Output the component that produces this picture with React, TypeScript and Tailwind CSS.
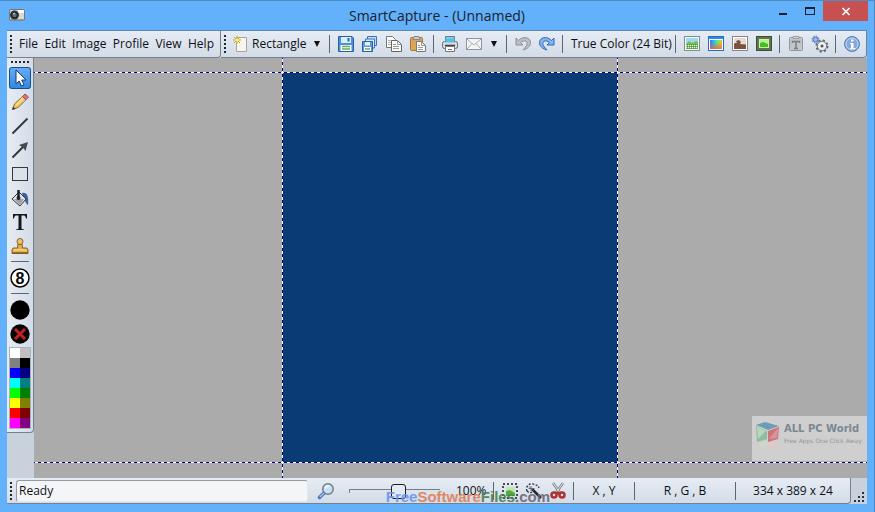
import type { ReactNode } from "react";

const panel = "bg-gradient-to-b from-[#e6ecf4] to-[#d3dce7] border-[#77818d]";

const Grip = ({ vertical = false }: { vertical?: boolean }) => (
  <div
    className={
      vertical
        ? "h-[18px] w-[2px] shrink-0 bg-[repeating-linear-gradient(180deg,#1d2733_0_2px,transparent_2px_4px)]"
        : "h-[2px] w-[18px] shrink-0 bg-[repeating-linear-gradient(90deg,#1d2733_0_2px,transparent_2px_4px)]"
    }
  />
);

const Separator = () => <div className="-ml-px h-[18px] w-px shrink-0 bg-[#5c6671]" />;

interface IconButtonProps {
  label: string;
  children: ReactNode;
}

const IconButton = ({ label, children }: IconButtonProps) => (
  <button type="button" aria-label={label} title={label} className="size-4 shrink-0">
    <svg viewBox="0 0 16 16" className="size-4 overflow-visible" fill="none">
      {children}
    </svg>
  </button>
);

const DropArrow = ({ label }: { label: string }) => (
  <button type="button" aria-label={label} className="w-[9px] shrink-0">
    <svg viewBox="0 0 9 8" className="h-2 w-[9px]">
      <path d="M1 1h6L4 7z" fill="#111" />
    </svg>
  </button>
);

const TitleBar = () => (
  <header className="relative flex h-[29px] shrink-0 items-start justify-end">
    <svg viewBox="0 0 16 12" className="absolute left-[9px] top-2 h-3 w-4">
      <rect x=".5" y=".5" width="15" height="11" rx="1.500" fill="#d8d8d5" stroke="#777" />
      <path d="M9 1h6v3H9z" fill="#fafafa" />
      <path d="M1 10h14v1.500H1z" fill="#9b9b98" />
      <circle cx="5.500" cy="6" r="4.500" fill="#30343a" />
      <circle cx="5.500" cy="6" r="2.800" fill="#62707c" stroke="#171b20" />
      <path d="M4 5l2-1" stroke="#d7e4ec" />
    </svg>
    <h1 className="absolute inset-x-0 top-[5px] text-center text-[14px] leading-5 text-[#17212b]">
      SmartCapture - (Unnamed)
    </h1>
    <div className="relative mr-[6px] flex">
      <button type="button" aria-label="Minimize" className="h-5 w-[26px]">
        <svg viewBox="0 0 26 20"><path d="M9 12h8v2H9z" fill="#14212e" /></svg>
      </button>
      <button type="button" aria-label="Maximize" className="h-5 w-[27px]">
        <svg viewBox="0 0 27 20"><path d="M9 6h10v8H9zM10 8v5h8V8z" fill="#14212e" fillRule="evenodd" /></svg>
      </button>
      <button type="button" aria-label="Close" className="h-5 w-[45px] bg-[#c75050]">
        <svg viewBox="0 0 45 20"><path d="M19.500 7l7 7M26.500 7l-7 7" stroke="#fff" strokeWidth="1.700" /></svg>
      </button>
    </div>
  </header>
);

const PictureFrame = ({ stroke, children }: { stroke: string; children: ReactNode }) => (
  <>
    <rect x=".5" y=".5" width="15" height="14" fill="#fff" stroke={stroke} />
    {children}
  </>
);

const TopBars = () => (
  <div className="flex h-[27px] shrink-0 bg-[#c9d1dc]">
    <nav className={`flex w-[214px] shrink-0 items-center rounded-br-[4px] border-r border-b pl-[3px] ${panel}`}>
      <Grip vertical />
      <div className="flex flex-1 justify-between pr-[6px] pl-[7px]">
        {["File", "Edit", "Image", "Profile", "View", "Help"].map((item) => (
          <button key={item} type="button">{item}</button>
        ))}
      </div>
    </nav>
    <div className={`flex flex-1 items-center gap-2 overflow-hidden rounded-br-[4px] border-r border-b pl-[3px] ${panel}`}>
      <Grip vertical />
      <button type="button" className="-ml-px flex w-[72px] shrink-0 items-center gap-1 whitespace-nowrap">
        <svg viewBox="0 0 15 16" className="h-4 w-[15px] shrink-0">
          <path d="M3.500 1.500h10v14h-10z" fill="#f7f5ee" stroke="#a8a79f" />
          <path d="M4 0v8M0 4h8M1 1l6 6M7 1L1 7" stroke="#c9ab18" />
          <circle cx="4" cy="4" r="1.500" fill="#fff47a" />
        </svg>
        Rectangle
      </button>
      <DropArrow label="Capture modes" />
      <Separator />
      <IconButton label="Save">
        <path d="M.5.500h13.500l1.500 1.500v13.500H.500z" fill="#4c90dc" stroke="#28609f" />
        <path d="M3 1h10v6H3z" fill="#d9edfb" />
        <path d="M9.500 2h2v3.500h-2z" fill="#2d67ab" />
        <path d="M2.500 9h11v6h-11z" fill="#fff" />
        <path d="M4 10.500h8M4 13h8" stroke="#5fac59" strokeWidth="1.500" />
      </IconButton>
      <IconButton label="Save all">
        <path d="M5.500.500h9v9h-9z" fill="#bdd9f6" stroke="#3c73b9" />
        <path d="M3.500 3h9v9h-9z" fill="#d9eafb" stroke="#3c73b9" />
        <path d="M.5 5.500h10v10H.500z" fill="#5c9be0" stroke="#28609f" />
        <path d="M3 6h5v3.500H3z" fill="#e4f2fd" />
        <path d="M2 11h7v4H2z" fill="#fff" />
        <path d="M3 13h5" stroke="#5fac59" strokeWidth="1.500" />
      </IconButton>
      <IconButton label="Copy">
        <path d="M.5.500h6l3 3v8h-9z" fill="#fafafa" stroke="#777" />
        <path d="M2 4.500h4M2 6.500h4M2 8.500h4" stroke="#b5b5b5" />
        <path d="M5.500 4.500h6l4 4v7h-10z" fill="#fafafa" stroke="#666" />
        <path d="M11.500 4.500v4h4M7 8.500h3M7 10.500h6M7 12.500h6" stroke="#999" />
      </IconButton>
      <IconButton label="Paste">
        <rect x=".5" y="1.500" width="12" height="13" rx="1" fill="#dba557" stroke="#a77730" />
        <path d="M4 .5h5l1 3H3z" fill="#ccc" stroke="#888" />
        <path d="M6.500 5.500h5l4 4v6h-9z" fill="#fafafa" stroke="#777" />
        <path d="M11.500 5.500v4h4M8 9.500h2M8 11.500h5M8 13.500h5" stroke="#999" />
      </IconButton>
      <Separator />
      <IconButton label="Print">
        <path d="M3.500.500h9v7h-9z" fill="#7fd3ec" stroke="#6b7b86" />
        <rect x=".5" y="5.500" width="15" height="7" rx="2" fill="#d7dade" stroke="#646b72" />
        <path d="M3.500 2.500h9v4h-9z" fill="#58c1e2" />
        <path d="M3 9.500h10" stroke="#3c4248" strokeWidth="1.500" />
        <path d="M3.500 10.500h9v5h-9z" fill="#fff" stroke="#777" />
        <path d="M6 13.500h4" stroke="#777" />
      </IconButton>
      <IconButton label="E-mail">
        <rect x=".5" y="2.500" width="15" height="11" fill="#f4f4f4" stroke="#8f969d" />
        <path d="M1 3l7 6 7-6M1 13l5-5.500M15 13l-5-5.500" stroke="#a8adb2" />
      </IconButton>
      <DropArrow label="Send to" />
      <Separator />
      <IconButton label="Undo">
        <path d="M1 2v7h7L5.500 6.500C9 3.500 13 5 12 8.500c-.6 2-2 3-4 5.500 4-1 7.500-3.500 7.500-7.500C15.500 1.500 8-.500 3.500 4.500z" fill="#bcc0c4" stroke="#8c9196" strokeLinejoin="round" />
      </IconButton>
      <IconButton label="Redo">
        <path d="M15 2v7H8l2.500-2.500C7 3.500 3 5 4 8.500c.6 2 2 3 4 5.500C4 13 .5 10.500.500 6.500.500 1.500 8-.500 12.500 4.500z" fill="#85b7ef" stroke="#2c67b8" strokeLinejoin="round" />
      </IconButton>
      <Separator />
      <button type="button" className="w-[97px] shrink-0 text-left whitespace-nowrap">True Color (24 Bit)</button>
      <Separator />
      <IconButton label="Resize picture">
        <PictureFrame stroke="#7f8c91">
          <path d="M2 2h12v6H2z" fill="#9adcf2" />
          <path d="M2 8l3-3 3 2 4-2 2 1v7H2z" fill="#79b85b" />
          <path d="M2 9.500h12M2 11.500h12" stroke="#e4f5d8" strokeDasharray="1 1" />
          <path d="M3 8.500h11M3 10.500h11M3 12.500h11" stroke="#4d9a46" strokeDasharray="1 1" />
        </PictureFrame>
      </IconButton>
      <IconButton label="Colors">
        <defs>
          <linearGradient id="hues">
            <stop stopColor="#3f6df0" />
            <stop offset=".35" stopColor="#22c8f0" />
            <stop offset=".65" stopColor="#6be86a" />
            <stop offset="1" stopColor="#ffc02c" />
          </linearGradient>
          <linearGradient id="warm" x2="0" y2="1">
            <stop offset=".2" stopColor="#ff5a3c" stopOpacity="0" />
            <stop offset="1" stopColor="#ff5a3c" stopOpacity=".8" />
          </linearGradient>
        </defs>
        <PictureFrame stroke="#1e6fc4">
          <path d="M1 1h14v2H1z" fill="#2b8ee6" />
          <path d="M2 4h12v9H2z" fill="url(#hues)" />
          <path d="M2 4h12v9H2z" fill="url(#warm)" />
        </PictureFrame>
      </IconButton>
      <IconButton label="Sepia">
        <PictureFrame stroke="#8c8585">
          <path d="M2 2h12v7H2z" fill="#e6dad4" />
          <path d="M2 8l1-1h2L4 5l3-1 2 2-1 2 6 .5V13H2z" fill="#79533f" />
        </PictureFrame>
      </IconButton>
      <IconButton label="Frame">
        <rect x=".5" y=".5" width="15" height="14" fill="#5b7555" stroke="#3a4e3b" />
        <path d="M3 3h10v9H3z" fill="#d8f0a0" />
        <path d="M4 4h8v4H4z" fill="#b6f090" />
        <path d="M4 7l3-1 5 2v3H4z" fill="#3cc421" />
      </IconButton>
      <Separator />
      <IconButton label="Text from clipboard">
        <rect x="1.500" y="1.500" width="13" height="13" rx="1" fill="#c3c6ca" stroke="#92979c" />
        <path d="M5 .5h6v2H5z" fill="#ddd" stroke="#989ca0" />
        <path d="M4.500 7V5.500h7V7M8 5.500v7M6 12.500h4" stroke="#777c81" strokeWidth="1.500" />
      </IconButton>
      <IconButton label="Settings">
        <circle cx="3.500" cy="3.500" r="2.500" fill="#9bb8e8" stroke="#4772b6" />
        <circle cx="3.500" cy="3.500" r="3.500" stroke="#4772b6" strokeDasharray="1.400 1.350" />
        <circle cx="10" cy="10" r="5.500" stroke="#60666d" strokeWidth="2" strokeDasharray="2.200 2.120" />
        <circle cx="10" cy="10" r="4.700" fill="#eceff1" stroke="#70767c" />
        <circle cx="10" cy="10" r="1.500" fill="#4f565d" />
      </IconButton>
      <Separator />
      <IconButton label="About">
        <circle cx="8" cy="8" r="7.400" fill="#83a9dd" stroke="#4877b8" />
        <circle cx="8" cy="8" r="6" stroke="#c6daf2" />
        <path d="M7 3.500h2.500v2H7zM6 7h3.500v5H11v1H6v-1h1V8H6z" fill="#fff" />
      </IconButton>
    </div>
  </div>
);

interface Tool {
  label: string;
  icon: ReactNode;
  active?: boolean;
  ruleAfter?: boolean;
}

const tools: Tool[] = [
  {
    label: "Select",
    active: true,
    icon: <path d="M7 3v14l3.200-3 2.300 5 2.500-1.200-2.300-4.800H17z" fill="#fff" stroke="#173b64" strokeLinejoin="round" />,
  },
  {
    label: "Pencil",
    icon: (
      <>
        <path d="M4 18l1.500-5 8-7.500 3.500 3.300L9 16.500z" fill="#f3cb61" stroke="#8b6a2a" />
        <path d="M13.500 5.500L16 3l3.500 3L17 8.800z" fill="#df7078" stroke="#a04c50" />
        <path d="M12 7l3.300 3.300" stroke="#c9ced3" strokeWidth="1.500" />
        <path d="M7 14l7-6.500" stroke="#fff0a8" />
        <path d="M3 19l1-3.500L6.500 18z" fill="#333" />
      </>
    ),
  },
  { label: "Line", icon: <path d="M3.500 18.500L18.500 3.500" stroke="#33383d" strokeWidth="2" /> },
  {
    label: "Arrow",
    icon: (
      <>
        <path d="M3.500 18.500L15 7" stroke="#33383d" strokeWidth="2" />
        <path d="M19 3l-2.500 9-2.500-3.500L10 6z" fill="#444a50" />
      </>
    ),
  },
  { label: "Rectangle", icon: <rect x="3.500" y="4.500" width="15" height="13" fill="#dce2ea" stroke="#343a40" /> },
  {
    label: "Fill",
    icon: (
      <>
        <path d="M13 6c5-1 7 3 6 12-3-2-3-6-5-8z" fill="#3e61a1" />
        <path d="M3 12l7-7 7 7-6 7z" fill="#e5e7e9" stroke="#333" />
        <path d="M5 12h10l-4 6z" fill="#9da2a7" />
        <path d="M9.500 3v7" stroke="#1e2226" strokeWidth="2.500" />
        <circle cx="9.500" cy="11" r="2" fill="#1e2226" />
      </>
    ),
  },
  {
    label: "Text",
    icon: <path d="M4 3h14v4.500h-1C16.500 5 16 4.500 14 4.500h-1.500V17c0 1 .5 1.300 2.500 1.500V19H7v-.500c2-.2 2.500-.5 2.500-1.500V4.500H8C6 4.500 5.500 5 5 7.500H4z" fill="#15191d" />,
  },
  {
    label: "Stamp",
    ruleAfter: true,
    icon: (
      <>
        <path d="M9 9h4l.5 4H18l1 2v3.500H3V15l1-2h4.500z" fill="#e2b052" stroke="#886322" />
        <circle cx="11" cy="6.500" r="3" fill="#efc36c" stroke="#886322" />
        <path d="M4.500 15h13" stroke="#fbe3a4" />
        <path d="M3 18h16" stroke="#825b1d" strokeWidth="1.500" />
      </>
    ),
  },
  {
    label: "Counter",
    ruleAfter: true,
    icon: (
      <>
        <circle cx="11" cy="11" r="9" fill="#fff" stroke="#080808" strokeWidth="1.500" />
        <text x="11" y="16.500" textAnchor="middle" fontSize="16" fontWeight="700" fontFamily="Liberation Sans" fill="#080808">8</text>
      </>
    ),
  },
  { label: "Outline color", icon: <circle cx="11" cy="11" r="9.700" fill="#000" /> },
  {
    label: "No fill",
    icon: (
      <>
        <circle cx="11" cy="11" r="9.700" fill="#060606" />
        <path d="M6 6l10 10M16 6L6 16" stroke="#c51f22" strokeWidth="3" />
      </>
    ),
  },
];

const swatches = [
  { name: "White", color: "bg-[#ffffff]" },
  { name: "Silver", color: "bg-[#c0c0c0]" },
  { name: "Gray", color: "bg-[#808080]" },
  { name: "Black", color: "bg-[#000000]" },
  { name: "Blue", color: "bg-[#0000ff]" },
  { name: "Navy", color: "bg-[#000080]" },
  { name: "Aqua", color: "bg-[#00ffff]" },
  { name: "Teal", color: "bg-[#008080]" },
  { name: "Lime", color: "bg-[#00ff00]" },
  { name: "Green", color: "bg-[#008000]" },
  { name: "Yellow", color: "bg-[#ffff00]" },
  { name: "Olive", color: "bg-[#808000]" },
  { name: "Red", color: "bg-[#ff0000]" },
  { name: "Maroon", color: "bg-[#800000]" },
  { name: "Fuchsia", color: "bg-[#ff00ff]" },
  { name: "Purple", color: "bg-[#800080]" },
];

const ToolBox = () => (
  <aside className="w-[27px] shrink-0 bg-[#c9d1dc]">
    <div className="flex flex-col items-center rounded-br-[4px] border-r border-b border-[#77818d] bg-gradient-to-r from-[#e6ecf4] to-[#d3dce7] pb-[3px]">
      <div className="flex h-2 items-center"><Grip /></div>
      {tools.map((tool) => (
        <div key={tool.label} className="flex flex-col items-center">
          <button type="button" aria-label={tool.label} title={tool.label} className="flex h-6 items-center">
            <svg
              viewBox="0 0 22 22"
              fill="none"
              className={`size-[22px] ${tool.active ? "rounded-[3px] bg-gradient-to-b from-[#65adf7] to-[#2f86e2] outline outline-1 -outline-offset-1 outline-[#1b4f8c]" : ""}`}
            >
              {tool.icon}
            </svg>
          </button>
          {tool.ruleAfter && <div className="my-[3px] h-[2px] w-[18px] border-t border-[#5c6671]" />}
        </div>
      ))}
      <div className="mt-px grid w-[22px] grid-cols-2 border border-[#aab2bc]">
        {swatches.map((swatch) => (
          <button key={swatch.name} type="button" aria-label={swatch.name} className={`h-[10px] ${swatch.color}`} />
        ))}
      </div>
    </div>
  </aside>
);

const guideX = "absolute -inset-x-[200vw] h-px bg-[repeating-linear-gradient(90deg,#00008b_0_3px,#fff_3px_6px)]";
const guideY = "absolute -inset-y-[200vh] w-px bg-[repeating-linear-gradient(180deg,#00008b_0_3px,#fff_3px_6px)]";

const Canvas = () => (
  <main className="relative flex flex-1 items-start justify-center overflow-hidden bg-[#ababab] pt-[14px] pr-px">
    {/* Captured area with its crop guides */}
    <div className="relative h-[391px] w-[336px] bg-[#0a3b75]">
      <div className={`${guideX} top-0`} />
      <div className={`${guideX} bottom-0`} />
      <div className={`${guideY} left-0`} />
      <div className={`${guideY} right-0`} />
    </div>
    <div className="absolute right-0 bottom-[17px] flex h-[45px] w-[115px] gap-1 bg-[#cfcfcf] pt-[6px] pl-1 whitespace-nowrap">
      <svg viewBox="0 0 24 32" className="h-8 w-6 shrink-0">
        <path d="M0 3L9 0l14 4-11 4z" fill="#6a9eb5" />
        <path d="M0 4l11 5v8L1 20z" fill="#8ebd9b" />
        <path d="M1 5l9 4-8 8z" fill="#b8d5c0" />
        <path d="M12 9l11-4-1 12-10 3z" fill="#ca747b" />
        <path d="M13 17l9-11-1 10z" fill="#d99499" />
        <path d="M1 22l10-3v10z" fill="#cbd7cd" />
        <path d="M12 21l9-3-1 7-8 4z" fill="#dec9cb" />
      </svg>
      <div className="font-['DejaVu_Sans',sans-serif]">
        <p className="text-[10px] leading-[13px] font-bold text-[#7b8792]">ALL PC World</p>
        <p className="mt-px text-[6px] leading-[9px] text-[#8e969d]">Free Apps One Click Away</p>
      </div>
    </div>
  </main>
);

const StatusBar = () => (
  <footer className="relative flex h-[26px] shrink-0 bg-[#c9d1dc]">
    <div className={`flex flex-1 items-center rounded-br-[4px] border-r border-b pt-px pl-[3px] whitespace-nowrap ${panel}`}>
      <Grip vertical />
      <output className="ml-1 h-[22px] flex-1 rounded-[3px] border border-[#929ba5] border-r-[#e3e8ed] border-b-[#e3e8ed] bg-[#f4f5f6] pl-[2px] leading-5">
        Ready
      </output>
      <div className="ml-[10px] flex shrink-0 items-center">
        <IconButton label="Zoom">
          <path d="M1.500 14.500L6 10" stroke="#4776ba" strokeWidth="3.500" strokeLinecap="round" />
          <path d="M1.800 14L6 10" stroke="#a7c7ee" strokeWidth="1.500" />
          <circle cx="10" cy="6" r="5.200" fill="#c5e1f8" stroke="#747d86" strokeWidth="1.500" />
          <path d="M7 5.500C7.500 3.500 9 3 11 3" stroke="#fff" strokeWidth="1.500" />
        </IconButton>
        <input
          type="range"
          aria-label="Zoom level"
          min={0}
          max={100}
          defaultValue={54}
          className="ml-[15px] h-[15px] w-[91px] appearance-none bg-transparent [&::-webkit-slider-runnable-track]:h-1 [&::-webkit-slider-runnable-track]:border-t [&::-webkit-slider-runnable-track]:border-l [&::-webkit-slider-runnable-track]:border-[#747e84] [&::-webkit-slider-thumb]:-mt-[6px] [&::-webkit-slider-thumb]:h-[15px] [&::-webkit-slider-thumb]:w-[15px] [&::-webkit-slider-thumb]:appearance-none [&::-webkit-slider-thumb]:rounded-[3px] [&::-webkit-slider-thumb]:border [&::-webkit-slider-thumb]:border-[#171b20] [&::-webkit-slider-thumb]:bg-[#e4eaf1]"
        />
        <span className="ml-4 w-[29px]">100%</span>
      </div>
      <div className="ml-[9px] flex shrink-0 items-center gap-2">
        <Separator />
        <IconButton label="Select image">
          <rect x="1" y="1" width="14" height="14" stroke="#171b20" strokeWidth="1.500" strokeDasharray="2 2" />
          <path d="M4 4h9v9H4z" fill="#c0e5ae" />
          <path d="M4 8l4-1 5 3v3H4z" fill="#52b03a" />
        </IconButton>
        <IconButton label="Magic wand">
          <path d="M1 8C-1 3 4 0 7 1s5 1 6 4M1 8c2 2 4 2 5 1" stroke="#272c31" strokeDasharray="2 1.500" strokeWidth="1.300" />
          <path d="M6 6l9 9" stroke="#22272c" strokeWidth="2.500" />
          <path d="M5 3v5M2.500 5.500h6M3 3.500l4 4" stroke="#656c73" />
        </IconButton>
        <IconButton label="Cut">
          <path d="M3 0l7 10M13 0L6 10" stroke="#7a8188" strokeWidth="2.500" />
          <path d="M3 0l7 10M13 0L6 10" stroke="#e1e5e8" />
          <circle cx="4" cy="12" r="2.500" stroke="#b2302b" strokeWidth="2.500" />
          <circle cx="12" cy="12" r="2.500" stroke="#b2302b" strokeWidth="2.500" />
          <path d="M6 10l2-2 2 2-2 2z" fill="#b2302b" />
        </IconButton>
        <Separator />
      </div>
      <span className="w-[60px] shrink-0 text-center">X , Y</span>
      <div className="h-[18px] w-px shrink-0 bg-[#5c6671]" />
      <span className="w-[100px] shrink-0 text-center">R , G , B</span>
      <div className="h-[18px] w-px shrink-0 bg-[#5c6671]" />
      <span className="w-[114px] shrink-0 text-center">334 x 389 x 24</span>
    </div>
    <svg viewBox="0 0 16 26" className="h-[26px] w-4 shrink-0">
      <path d="M11 14h2v2h-2zM11 18h2v2h-2zM7 18h2v2H7zM11 22h2v2h-2zM7 22h2v2H7zM3 22h2v2H3z" fill="#27313d" />
    </svg>
    {/* Site mark over the bar */}
    <p className="pointer-events-none absolute top-[10px] right-[317px] font-['Liberation_Sans',Arial,sans-serif] text-[15px] leading-[18px] font-bold opacity-90">
      <span className="text-[#6b95ee]">Free</span>
      <span className="text-[#df8058]">Software</span>
      <span className="text-[#4c8052]">Files</span>
      <span className="text-[#6e6678]">.com</span>
    </p>
  </footer>
);

const App = () => {
  return (
    <div className="flex h-screen min-h-[512px] flex-col border-t border-r border-[#4b8bc6] bg-[#63b1fa] font-['Open_Sans','Noto_Sans',sans-serif] text-[12px] leading-4 text-[#0d1116]">
      <TitleBar />
      <div className="mr-[7px] mb-2 ml-[7px] flex flex-1 flex-col border-t border-[#5d87ad]">
        <TopBars />
        <div className="flex flex-1">
          <ToolBox />
          <Canvas />
        </div>
        <StatusBar />
      </div>
    </div>
  );
};

export default App;
